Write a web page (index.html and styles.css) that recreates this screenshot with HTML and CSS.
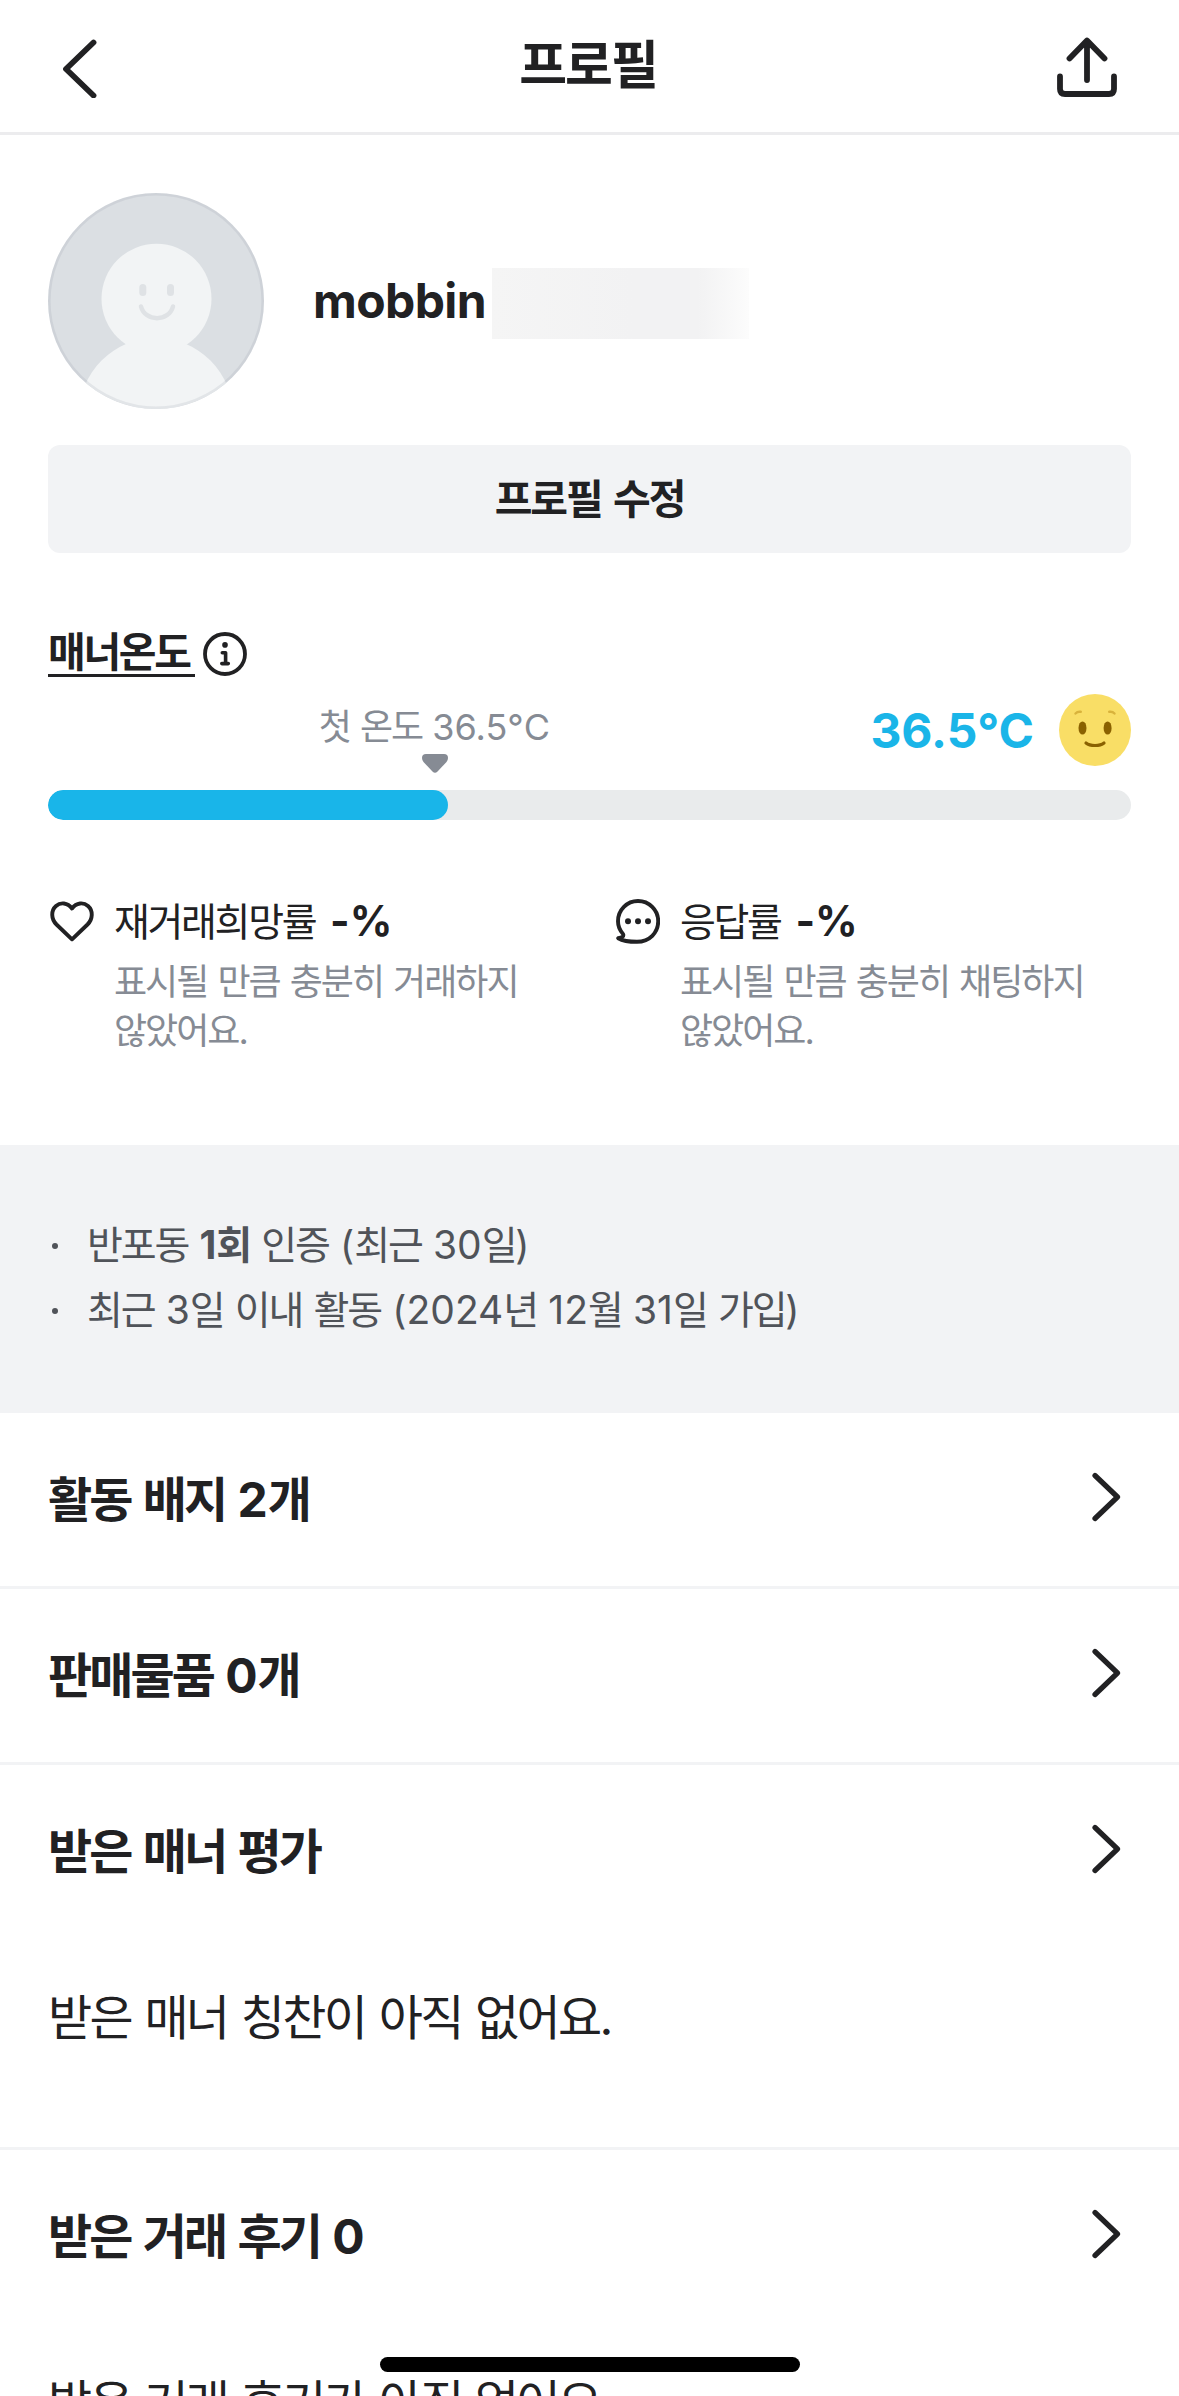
FILE: index.html
```html
<!DOCTYPE html>
<html lang="ko">
<head>
<meta charset="utf-8">
<title>프로필</title>
<link rel="stylesheet" href="styles.css">
</head>
<body>
<div class="screen">
  <header class="topbar">
    <svg class="icon back" viewBox="0 0 60 66"><path d="M40.500 10.500 13 37 40.500 63.500"/></svg>
    <h1 class="title">프로필</h1>
    <svg class="icon share" viewBox="0 0 66 66"><path d="M33 9V48M15.500 26.500 33 8.500 50.500 26.500M6 44.500V57Q6 62 11 62H55Q60 62 60 57V44.500"/></svg>
  </header>

  <section class="profile">
    <div class="identity">
      <svg class="avatar" viewBox="0 0 216 216">
        <defs><clipPath id="disc"><circle cx="108" cy="108" r="108"/></clipPath></defs>
        <g clip-path="url(#disc)">
          <rect width="216" height="216" fill="#dbdfe3"/>
          <circle cx="108" cy="222" r="77" fill="#f2f4f5"/>
          <circle cx="108.500" cy="105.700" r="55" fill="#f2f4f5"/>
        </g>
        <rect x="91.300" y="91" width="7" height="12" rx="3.500" fill="#dfe2e5"/>
        <rect x="119" y="91" width="7" height="12" rx="3.500" fill="#dfe2e5"/>
        <path d="M93 113.500C97 129 121 129 125 113.500" fill="none" stroke="#dfe2e5" stroke-width="4.500" stroke-linecap="round"/>
        <circle cx="108" cy="108" r="106.700" fill="none" stroke="#73788c" stroke-opacity=".12" stroke-width="2.600"/>
      </svg>
      <div class="name">mobbin<span class="redacted"></span></div>
    </div>
    <button class="edit">프로필 수정</button>
  </section>

  <section class="manner">
    <div class="manner-title">
      <span class="manner-label">매너온도</span>
      <svg class="info" viewBox="0 0 44 44"><circle cx="22" cy="22" r="20" fill="none" stroke="#212123" stroke-width="3.800"/><circle cx="22" cy="12.900" r="2.800" fill="#212123"/><path d="M19.300 20.700H22.600V31.600M18.800 31.600H25.300" fill="none" stroke="#212123" stroke-width="3.600" stroke-linecap="round" stroke-linejoin="round"/></svg>
    </div>
    <div class="temps">
      <div class="first-temp">
        <span class="first-label">첫 온도 <span class="n">36.5°C</span></span>
        <svg class="marker" viewBox="0 0 26 19"><path d="M4 0H22Q26 0 26 4Q26 6 24.500 8L15.500 17.500Q13 20 10.500 17.500L1.500 8Q0 6 0 4Q0 0 4 0Z" fill="#868b94"/></svg>
      </div>
      <div class="now">
        <span class="now-value">36.5°C</span>
        <svg class="face" viewBox="0 0 72 72"><circle cx="36" cy="36" r="36" fill="#f9de66"/><ellipse cx="23.500" cy="34" rx="4" ry="6.600" fill="#8a6100"/><ellipse cx="48.600" cy="34" rx="4" ry="6.600" fill="#8a6100"/><path d="M27 49C31 52.300 41 52.300 45 49" fill="none" stroke="#8a6100" stroke-width="3.200" stroke-linecap="round"/><path d="M16.500 19.500Q18.500 17.300 21.800 17.800M50.200 17.800Q53.500 17.300 55.500 19.500" fill="none" stroke="#d9b33c" stroke-width="2.400" stroke-linecap="round"/></svg>
      </div>
    </div>
    <div class="bar"><div class="bar-fill" style="width:36.9%"></div></div>
  </section>

  <section class="stats">
    <div class="stat">
      <svg class="stat-icon" viewBox="0 0 44 45"><path d="M22 40.300 6.500 25.500C1 20 .800 11.500 6 7C10.500 3 17.500 3.400 22 9.500C26.500 3.400 33.500 3 38 7C43.200 11.500 43 20 37.500 25.500Z"/></svg>
      <div class="stat-text">
        <div class="stat-head">재거래희망률 <b>-%</b></div>
        <p class="stat-note">표시될 만큼 충분히 거래하지<br>않았어요.</p>
      </div>
    </div>
    <div class="stat">
      <svg class="stat-icon" viewBox="0 0 44 45"><path d="M7.200 35.200C3.800 31.500 2 27.500 2 22.300C2 11 11 2 22 2S42.200 11 42.200 22.300S33.500 42.800 21 42.800C13.500 42.800 7 42 2.200 39.200C6.500 38.500 7.800 37.500 7.200 35.200Z"/><g class="dots"><circle cx="12" cy="22.300" r="3"/><circle cx="22" cy="22.300" r="3"/><circle cx="32" cy="22.300" r="3"/></g></svg>
      <div class="stat-text">
        <div class="stat-head">응답률 <b>-%</b></div>
        <p class="stat-note">표시될 만큼 충분히 채팅하지<br>않았어요.</p>
      </div>
    </div>
  </section>

  <ul class="facts">
    <li>반포동 <b><span class="n">1</span>회</b> 인증 <span class="n">(</span>최근 <span class="n">30</span>일<span class="n">)</span></li>
    <li>최근 <span class="n">3</span>일 이내 활동 <span class="n">(2024</span>년 <span class="n">12</span>월 <span class="n">31</span>일 가입<span class="n">)</span></li>
  </ul>

  <section class="block">
    <div class="row"><h2>활동 배지 <span class="n">2</span>개</h2><svg class="chev" viewBox="0 0 32 52"><path d="M6 4.500 28.500 26 6 47.500"/></svg></div>
  </section>
  <section class="block">
    <div class="row"><h2>판매물품 <span class="n">0</span>개</h2><svg class="chev" viewBox="0 0 32 52"><path d="M6 4.500 28.500 26 6 47.500"/></svg></div>
  </section>
  <section class="block">
    <div class="row"><h2>받은 매너 평가</h2><svg class="chev" viewBox="0 0 32 52"><path d="M6 4.500 28.500 26 6 47.500"/></svg></div>
    <p class="empty">받은 매너 칭찬이 아직 없어요.</p>
  </section>
  <section class="block">
    <div class="row"><h2>받은 거래 후기 <span class="n">0</span></h2><svg class="chev" viewBox="0 0 32 52"><path d="M6 4.500 28.500 26 6 47.500"/></svg></div>
    <p class="empty">받은 거래 후기가 아직 없어요.</p>
  </section>
  <div class="home-indicator"></div>
</div>
</body>
</html>
```
FILE: styles.css
```css
* { box-sizing: border-box; margin: 0; padding: 0; letter-spacing: -0.056em; word-spacing: 0.055em; }
body {
  width: 1179px;
  height: 2396px;
  overflow: hidden;
  background: #fff;
  color: #212123;
  font-family: Inter, "Noto Sans CJK KR", sans-serif;
  white-space: nowrap;
}
.screen { position: relative; height: 2396px; overflow: hidden; }
svg { display: block; flex: none; }
.n { letter-spacing: 0; }

.topbar {
  height: 135px;
  border-bottom: 3px solid #ececee;
  display: grid;
  grid-template-columns: 66px 1fr 66px;
  align-items: center;
  padding: 0 59px 0 53px;
}
.icon { margin-bottom: 3px; fill: none; stroke: #212123; stroke-width: 5.8; stroke-linecap: round; stroke-linejoin: round; }
.back { width: 60px; height: 66px; }
.share { width: 66px; height: 66px; }
.title { padding-left: 3px; font-size: 52px; line-height: 60px; font-weight: 700; text-align: center; letter-spacing: -0.04em; }

.profile { padding: 58px 48px 0; }
.identity { display: flex; align-items: center; gap: 49px; }
.avatar { width: 216px; height: 216px; }
.name { display: flex; align-items: center; gap: 6px; font-size: 48px; line-height: 60px; font-weight: 700; letter-spacing: -0.013em; }
.redacted {
  width: 257px;
  height: 71px;
  margin-top: 4px;
  background: linear-gradient(90deg, #f5f5f5, #f2f2f3 55%, #f2f2f3 80%, #fcfcfc);
}
.edit {
  display: block;
  width: 100%;
  height: 108px;
  margin-top: 36px;
  border: 0;
  border-radius: 12px;
  background: #f2f3f5;
  color: inherit;
  font: 700 41px/60px Inter, "Noto Sans CJK KR", sans-serif;
  letter-spacing: -0.053em;
  word-spacing: 0.1em;
}

.manner { padding: 78px 48px 0; }
.manner-title { display: flex; align-items: center; gap: 8px; height: 46px; }
.manner-label { width: 147px; font-size: 41px; line-height: 43px; font-weight: 700; border-bottom: 3px solid #212123; height: 46px; }
.info { width: 44px; height: 44px; }
.temps { display: flex; justify-content: space-between; height: 113px; padding-top: 17px; }
.first-temp { display: flex; flex-direction: column; width: 400px; padding-top: 8px; }
.first-label { align-self: flex-end; margin-right: -102px; font-size: 36px; line-height: 50px; color: #868b94; }
.marker { align-self: flex-end; width: 26px; height: 19px; margin-top: 2px; }
.now { display: flex; align-items: center; gap: 25px; height: 72px; }
.now-value { font-size: 48px; font-weight: 700; letter-spacing: 0; color: #1ab5e8; }
.face { width: 72px; height: 72px; }
.bar { height: 30px; border-radius: 15px; background: #e9ebec; overflow: hidden; }
.bar-fill { height: 30px; border-radius: 15px; background: #19b5e9; }

.stats { display: grid; grid-template-columns: 566px 1fr; height: 325px; padding: 79px 48px 0 50px; }
.stat { display: flex; align-items: flex-start; gap: 20px; }
.stat-icon { width: 44px; height: 45px; fill: none; stroke: #212123; stroke-width: 3.9; stroke-linejoin: round; stroke-linecap: round; }
.dots { fill: #212123; stroke: none; }
.stat-head { font-size: 39px; line-height: 45px; letter-spacing: -0.06em; }
.stat-head b { margin-left: 4px; font-size: 42px; line-height: 40px; letter-spacing: 0; }
.stat-note { margin-top: 14px; font-size: 36px; line-height: 49px; color: #868b94; }

.facts { height: 268px; padding: 67px 48px; background: #f2f3f5; color: #505359; list-style: none; font-size: 39px; line-height: 65px; }
.facts li { display: block; word-spacing: 0.065em; }
.facts li::before {
  content: "";
  display: inline-block;
  width: 6px;
  height: 6px;
  margin: 0 29px 10px 4px;
  border-radius: 50%;
  background: #505359;
}

.block + .block { border-top: 3px solid #f2f3f5; }
.row { display: flex; align-items: center; justify-content: space-between; height: 173px; padding: 0 58px 0 48px; }
.row h2 { font-size: 48px; line-height: 60px; font-weight: 700; letter-spacing: -0.061em; word-spacing: 0.08em; }
.chev { width: 32px; height: 52px; margin-bottom: 5px; fill: none; stroke: #212123; stroke-width: 5.2; stroke-linecap: round; stroke-linejoin: round; }
.empty { height: 209px; padding: 50px 48px 0; font-size: 48px; line-height: 60px; }

.home-indicator { position: absolute; left: 380px; top: 2357px; width: 420px; height: 15px; border-radius: 8px; background: #000; }
```
